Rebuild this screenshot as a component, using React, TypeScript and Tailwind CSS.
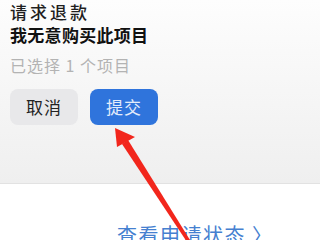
import React from 'react';

const font = { fontFamily: '"Noto Sans CJK SC", "Noto Sans", sans-serif' };

const App: React.FC = () => {
  return (
    <div className="relative w-[320px] h-[240px] overflow-hidden bg-white" style={font}>
      {/* Refund sheet */}
      <div className="flex flex-col pl-[10px] pb-[58px] bg-gradient-to-b from-[#fdfdfd] to-[#efefef] border-b border-[#e2e2e2]">
        <div className="h-[24px] leading-[24px] text-[17px] tracking-[3px] font-medium text-[#1f1f1f]">请求退款</div>
        <div className="h-[22px] leading-[22px] text-[17px] tracking-[0.3px] font-bold text-[#111]">我无意购买此项目</div>
        <div className="mt-[8px] h-[22px] leading-[22px] text-[16px] tracking-[1px] text-[#b3b3b3]">已选择 1 个项目</div>
        <div className="mt-[13px] flex gap-[12px]">
          <button className="w-[68px] h-[36px] rounded-[8px] bg-[#e8e8ea] text-[17px] text-[#222] tracking-[1px]">取消</button>
          <button className="w-[68px] h-[36px] rounded-[8px] bg-[#2f74dc] text-[17px] text-[#e3ecfb] tracking-[1px]">提交</button>
        </div>
      </div>

      {/* Status link */}
      <div className="mt-[39px] pl-[117px] text-[20px] leading-[24px] tracking-[1.5px] text-[#4580d0] whitespace-nowrap">
        查看申请状态 〉
      </div>

      {/* Red annotation arrow */}
      <svg className="absolute inset-0 pointer-events-none" width="320" height="240" viewBox="0 0 320 240">
        <polygon points="187,242 190,240 128,140 122,144" fill="#f2261c" />
        <polygon points="115,128 135,137 117,147" fill="#f2261c" />
      </svg>
    </div>
  );
};

export default App;
